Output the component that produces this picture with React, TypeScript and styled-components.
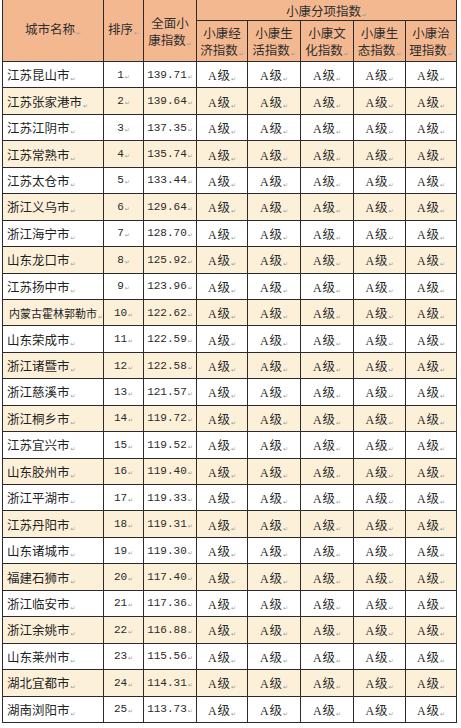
import styled, { createGlobalStyle } from 'styled-components';

const GlobalStyle = createGlobalStyle`
	html, body {
		margin: 0;
		padding: 0;
		background: #ffffff;
	}
	body {
		font-family: "Noto Sans CJK SC", "Liberation Sans", sans-serif;
		color: #222222;
	}
`;

interface CityRow {
	name: string;
	score: string;
}

const rows: CityRow[] = [
	{ name: '江苏昆山市', score: '139.71' },
	{ name: '江苏张家港市', score: '139.64' },
	{ name: '江苏江阴市', score: '137.35' },
	{ name: '江苏常熟市', score: '135.74' },
	{ name: '江苏太仓市', score: '133.44' },
	{ name: '浙江义乌市', score: '129.64' },
	{ name: '浙江海宁市', score: '128.70' },
	{ name: '山东龙口市', score: '125.92' },
	{ name: '江苏扬中市', score: '123.96' },
	{ name: '内蒙古霍林郭勒市', score: '122.62' },
	{ name: '山东荣成市', score: '122.59' },
	{ name: '浙江诸暨市', score: '122.58' },
	{ name: '浙江慈溪市', score: '121.57' },
	{ name: '浙江桐乡市', score: '119.72' },
	{ name: '江苏宜兴市', score: '119.52' },
	{ name: '山东胶州市', score: '119.40' },
	{ name: '浙江平湖市', score: '119.33' },
	{ name: '江苏丹阳市', score: '119.31' },
	{ name: '山东诸城市', score: '119.30' },
	{ name: '福建石狮市', score: '117.40' },
	{ name: '浙江临安市', score: '117.36' },
	{ name: '浙江余姚市', score: '116.88' },
	{ name: '山东莱州市', score: '115.56' },
	{ name: '湖北宜都市', score: '114.31' },
	{ name: '湖南浏阳市', score: '113.73' },
];

const subHeads = [
	['小康经', '济指数'],
	['小康生', '活指数'],
	['小康文', '化指数'],
	['小康生', '态指数'],
	['小康治', '理指数'],
];

const colWidths = [101, 40, 53, 51, 53, 53, 52, 51];

// little word-processor return mark after each cell text
const Mark = () => <ReturnMark>↵</ReturnMark>;

const App = () => {
	return (
		<>
			<GlobalStyle />
			<Page>
				<Table>
					<colgroup>
						{colWidths.map((w, i) => (
							<col key={i} style={{ width: w }} />
						))}
					</colgroup>
					<thead>
						<HeadRow height={21}>
							<HeadCell rowSpan={2}>
								城市名称
								<Mark />
							</HeadCell>
							<HeadCell rowSpan={2}>
								排序
								<Mark />
							</HeadCell>
							<HeadCell rowSpan={2}>
								<HeadLine>全面小</HeadLine>
								<HeadLine>
									康指数
									<Mark />
								</HeadLine>
							</HeadCell>
							<HeadCell colSpan={5}>
								<HeadLine>
									小康分项指数
									<Mark />
								</HeadLine>
							</HeadCell>
						</HeadRow>
						<HeadRow height={41}>
							{subHeads.map((lines, i) => (
								<HeadCell key={i}>
									<HeadLine>{lines[0]}</HeadLine>
									<HeadLine>
										{lines[1]}
										<Mark />
									</HeadLine>
								</HeadCell>
							))}
						</HeadRow>
					</thead>
					<tbody>
						{rows.map((row, i) => (
							<DataRow key={row.name} striped={i % 2 === 1}>
								<NameCell small={row.name.length > 6}>
									{row.name}
									<Mark />
								</NameCell>
								<RankCell>
									{i + 1}
									<Mark />
								</RankCell>
								<ScoreCell>
									{row.score}
									<Mark />
								</ScoreCell>
								{subHeads.map((_, j) => (
									<GradeCell key={j}>
										<GradeLetter>A</GradeLetter>级
										<Mark />
									</GradeCell>
								))}
							</DataRow>
						))}
					</tbody>
				</Table>
			</Page>
		</>
	);
};
export default App;

const Page = styled.div`
	width: 461px;
	height: 728px;
	overflow: hidden;
	padding: 0 0 0 2px;
	box-sizing: border-box;
`;

const Table = styled.table`
	border-collapse: collapse;
	table-layout: fixed;
	width: 454px;
	margin-top: -1px;
	td,
	th {
		border: 1px solid #2b2b2b;
		padding: 0;
		white-space: nowrap;
	}
	td {
		overflow: hidden;
	}
`;

const HeadRow = styled.tr<{ height: number }>`
	height: ${(p) => p.height}px;
`;

const HeadCell = styled.th`
	background: #f4b891;
	font-weight: 400;
	font-size: 12.5px;
	line-height: 17px;
	color: #2e2e2e;
	text-align: center;
	vertical-align: middle;
`;

const HeadLine = styled.div`
	display: block;
	height: 17px;
	line-height: 17px;
`;

const DataRow = styled.tr<{ striped: boolean }>`
	height: 26.44px;
	background: ${(p) => (p.striped ? '#fdf0d9' : '#ffffff')};
`;

const NameCell = styled.td<{ small: boolean }>`
	font-size: ${(p) => (p.small ? '11px' : '12.5px')};
	text-align: left;
	padding-left: ${(p) => (p.small ? '6px' : '4px')} !important;
	color: #1f1f1f;
`;

const RankCell = styled.td`
	font-family: "Liberation Mono", monospace;
	font-size: 11px;
	text-align: center;
	color: #2a2a2a;
`;

const ScoreCell = styled.td`
	font-family: "Liberation Mono", monospace;
	font-size: 11px;
	text-align: center;
	color: #2a2a2a;
`;

const GradeCell = styled.td`
	font-size: 12.5px;
	text-align: center;
	color: #2a2a2a;
`;

const GradeLetter = styled.span`
	font-family: "Liberation Serif", serif;
	font-size: 12px;
	margin-right: 1px;
`;

const ReturnMark = styled.span`
	font-family: "DejaVu Sans", sans-serif;
	font-size: 6px;
	color: #9a9a9a;
	margin-left: 1px;
	vertical-align: -1px;
`;
